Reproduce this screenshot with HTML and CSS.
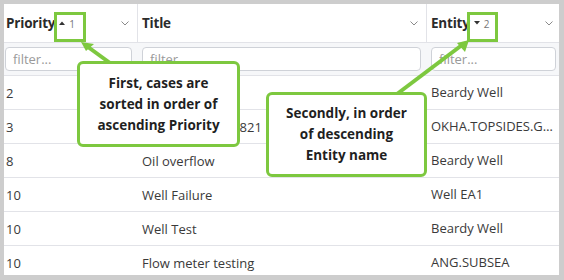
FILE: index.html
```html
<!DOCTYPE html>
<html>
<head>
<meta charset="utf-8">
<link rel="stylesheet" href="styles.css">
</head>
<body>
<div class="page">
  <div class="frame">
    <div class="grid">
      <div class="hcell c1"><span class="hlabel">Priority</span><span class="sort"><svg width="6" height="4" viewBox="0 0 6 4"><path d="M0 4L3 0.5 6 4z" fill="#333"/></svg><span class="num">1</span></span><span class="sp"></span><svg class="chev" width="8" height="5" viewBox="0 0 8 5"><path d="M0.5 0.5L4 4 7.5 0.5" fill="none" stroke="#8a8a8a" stroke-width="1"/></svg></div>
      <div class="hcell c2"><span class="hlabel">Title</span><span class="sp"></span><svg class="chev" width="8" height="5" viewBox="0 0 8 5"><path d="M0.5 0.5L4 4 7.5 0.5" fill="none" stroke="#8a8a8a" stroke-width="1"/></svg></div>
      <div class="hcell c3"><span class="hlabel">Entity</span><span class="sort"><svg width="6" height="4" viewBox="0 0 6 4"><path d="M0 0L3 3.5 6 0z" fill="#333"/></svg><span class="num">2</span></span><span class="sp"></span><svg class="chev" width="8" height="5" viewBox="0 0 8 5"><path d="M0.5 0.5L4 4 7.5 0.5" fill="none" stroke="#8a8a8a" stroke-width="1"/></svg></div>

      <div class="fcell"><input class="filter" placeholder="filter..."></div>
      <div class="fcell"><input class="filter" placeholder="filter..."></div>
      <div class="fcell"><input class="filter" placeholder="filter..."></div>

      <div class="cell c1">2</div><div class="cell c2">Gas leak</div><div class="cell c3">Beardy Well</div>
      <div class="cell c1">3</div><div class="cell c2">Leak inspection 821</div><div class="cell c3">OKHA.TOPSIDES.GAS</div>
      <div class="cell c1">8</div><div class="cell c2">Oil overflow</div><div class="cell c3">Beardy Well</div>
      <div class="cell c1">10</div><div class="cell c2">Well Failure</div><div class="cell c3">Well EA1</div>
      <div class="cell c1">10</div><div class="cell c2">Well Test</div><div class="cell c3">Beardy Well</div>
      <div class="cell c1">10</div><div class="cell c2">Flow meter testing</div><div class="cell c3">ANG.SUBSEA</div>
    </div>
  </div>

  <div class="hl hl1"></div>
  <div class="hl hl2"></div>

  <svg class="arrows" width="564" height="280" viewBox="0 0 564 280">
    <line x1="110" y1="63" x2="88" y2="47" stroke="#7dc83f" stroke-width="4"/>
    <path d="M81 42L94 44 86 51z" fill="#7dc83f"/>
    <line x1="397" y1="94" x2="462" y2="45" stroke="#7dc83f" stroke-width="4"/>
    <path d="M469 40L465 52 457 43z" fill="#7dc83f"/>
  </svg>

  <div class="callout co1">First, cases are<br>sorted in order of<br>ascending Priority</div>
  <div class="callout co2">Secondly, in order<br>of descending<br>Entity name</div>
</div>
</body>
</html>
```

FILE: styles.css
```css
html, body {
  margin: 0;
  padding: 0;
}
body {
  background: #cdcdcd;
  font-family: "Open Sans", "Noto Sans", sans-serif;
}
.page {
  position: relative;
  width: 564px;
  height: 280px;
  overflow: hidden;
}
.frame {
  box-sizing: border-box;
  width: 564px;
  height: 280px;
  border-style: solid;
  border-color: #cdcdcd;
  border-width: 4px 5px 5px 4px;
  background: #fff;
  overflow: hidden;
}
.grid {
  margin-left: -3px;
  display: grid;
  grid-template-columns: 137px 289px 135px;
  width: 561px;
}
.hcell {
  box-sizing: border-box;
  height: 39px;
  border-bottom: 1px solid #e2e3e8;
  border-right: 1px solid #e2e3e8;
  display: flex;
  align-items: center;
  padding: 0 8px 0 4px;
  background: #fff;
}
.hcell.c1 { padding-left: 5px; }
.hlabel {
  font-weight: 700;
  font-size: 13.5px;
  color: #2b2b2b;
  letter-spacing: -0.2px;
}
.sort {
  display: flex;
  align-items: center;
  margin-left: 4px;
  gap: 4px;
}
.num {
  font-size: 10px;
  color: #777;
  margin-top: 2px;
}
.sp { flex: 1; }
.chev { display: block; margin-top: 1px; }
.fcell {
  box-sizing: border-box;
  height: 33px;
  border-bottom: 1px solid #e2e3e8;
  background: #f6f7f9;
  padding: 4px 6px 4px 4px;
}
.filter {
  box-sizing: border-box;
  display: block;
  width: 100%;
  height: 24px;
  border: 1px solid #cfd2d8;
  border-radius: 4px;
  background: #fff;
  padding: 0 7px;
  font-family: "Open Sans", sans-serif;
  font-size: 13px;
  color: #333;
  outline: none;
}
.filter::placeholder { color: #9a9a9a; }
.cell {
  box-sizing: border-box;
  height: 34px;
  border-bottom: 1px solid #e2e3e8;
  display: flex;
  align-items: center;
  padding: 0 6px 0 4px;
  font-size: 13px;
  color: #3a3a3a;
  white-space: nowrap;
  overflow: hidden;
}
.cell.c1 { padding-left: 5px; }
.cell.c3 {
  display: block;
  line-height: 33px;
  text-overflow: ellipsis;
}
.hl {
  position: absolute;
  box-sizing: border-box;
  border: 3px solid #7dc83f;
  top: 12px;
  height: 30px;
}
.hl1 { left: 54px; width: 32px; }
.hl2 { left: 467px; width: 31px; }
.arrows {
  position: absolute;
  left: 0;
  top: 0;
}
.callout {
  position: absolute;
  box-sizing: border-box;
  border: 3px solid #7dc83f;
  border-radius: 6px;
  background: #fff;
  display: flex;
  align-items: center;
  justify-content: center;
  text-align: center;
  font-weight: 700;
  font-size: 13.5px;
  line-height: 21px;
  color: #1f1f1f;
}
.co1 { left: 77px; top: 61px; width: 163px; height: 86px; }
.co2 { left: 266px; top: 92px; width: 161px; height: 85px; }
```
